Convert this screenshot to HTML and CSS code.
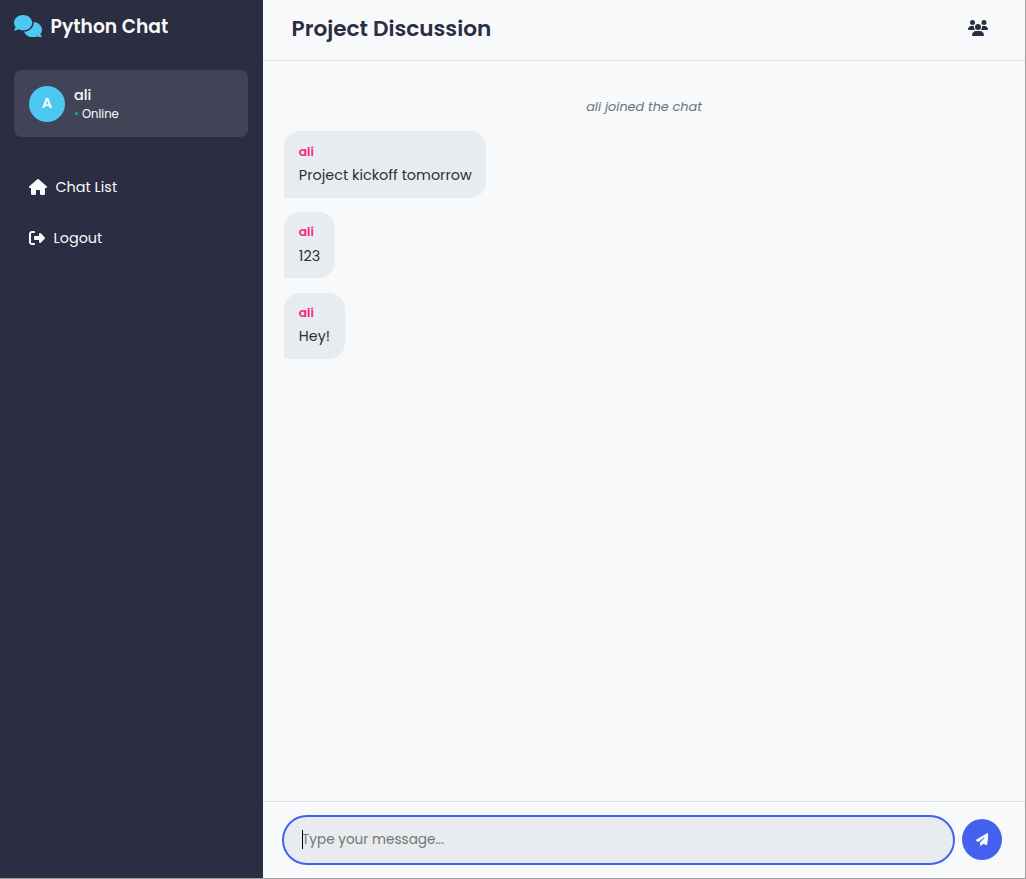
FILE: index.html
```html
<!DOCTYPE html>
<html lang="en">
<head>
<meta charset="utf-8">
<title>Python Chat</title>
<link rel="stylesheet" href="styles.css">
</head>
<body>
<div class="app">
  <aside class="sidebar">
    <div class="brand">
      <svg class="brand-icon" viewBox="0 0 640 512"><path d="M208 352c114.9 0 208-78.8 208-176S322.9 0 208 0S0 78.8 0 176c0 38.6 14.7 74.3 39.6 103.4c-3.5 9.4-8.7 17.7-14.2 24.7c-4.8 6.2-9.7 11-13.3 14.3c-1.8 1.6-3.3 2.9-4.3 3.7c-.5 .4-.9 .7-1.1 .8l-.2 .2C1 327.2-1.4 334.4 .8 340.9S9.1 352 16 352c21.8 0 43.8-5.6 62.1-12.5c9.2-3.5 17.8-7.4 25.2-11.4C134.1 343.3 169.8 352 208 352zM448 176c0 112.3-99.1 196.9-216.5 207C255.8 457.4 336.4 512 432 512c38.2 0 73.9-8.7 104.7-23.9c7.5 4 16 7.9 25.2 11.4c18.3 6.9 40.3 12.5 62.1 12.5c6.9 0 13.1-4.5 15.2-11.1c2.1-6.6-.2-13.8-5.8-17.9l-.2-.2c-.2-.2-.6-.4-1.1-.8c-1-.8-2.5-2-4.3-3.7c-3.6-3.3-8.5-8.1-13.3-14.3c-5.5-7-10.7-15.4-14.2-24.7c24.9-29 39.6-64.7 39.6-103.4c0-92.8-84.9-168.9-192.6-175.5c.4 5.1 .6 10.3 .6 15.5z"/></svg>
      <span class="brand-name">Python Chat</span>
    </div>
    <div class="user-card">
      <div class="avatar">A</div>
      <div class="user-info">
        <div class="user-name">ali</div>
        <div class="user-status"><i class="dot"></i><span>Online</span></div>
      </div>
    </div>
    <nav class="menu">
      <a class="menu-item">
        <svg class="home-icon" viewBox="0 0 576 512"><path d="M575.8 255.5c0 18-15 32.1-32 32.1h-32l.7 160.2c0 2.7-.2 5.4-.5 8.1V472c0 22.1-17.9 40-40 40H456c-1.1 0-2.2 0-3.3-.1c-1.4 .1-2.8 .1-4.2 .1H416 392c-22.1 0-40-17.9-40-40V448 384c0-17.7-14.3-32-32-32H256c-17.7 0-32 14.3-32 32v64 24c0 22.1-17.9 40-40 40H160 128.1c-1.5 0-3-.1-4.5-.2c-1.2 .1-2.4 .2-3.6 .2H104c-22.1 0-40-17.9-40-40V360c0-.9 0-1.9 .1-2.8V287.6H32c-18 0-32-14-32-32.1c0-9 3-17 10-24L266.4 8c7-7 15-8 22-8s15 2 21 7L564.8 231.5c8 7 12 15 11 24z"/></svg>
        <span class="menu-label">Chat List</span>
      </a>
      <a class="menu-item">
        <svg class="exit-icon" viewBox="0 0 512 512"><path d="M377.9 105.9L500.7 228.7c7.2 7.2 11.3 17.1 11.3 27.3s-4.1 20.1-11.3 27.3L377.9 406.1c-6.4 6.4-15 9.9-24 9.9c-18.7 0-33.9-15.2-33.9-33.9l0-62.1-128 0c-17.7 0-32-14.3-32-32l0-64c0-17.7 14.3-32 32-32l128 0 0-62.1c0-18.7 15.2-33.9 33.9-33.9c9 0 17.6 3.6 24 9.9zM160 96L96 96c-17.7 0-32 14.3-32 32l0 256c0 17.7 14.3 32 32 32l64 0c17.7 0 32 14.3 32 32s-14.3 32-32 32l-64 0c-53 0-96-43-96-96L0 128C0 75 43 32 96 32l64 0c17.7 0 32 14.3 32 32s-14.3 32-32 32z"/></svg>
        <span class="menu-label">Logout</span>
      </a>
    </nav>
  </aside>
  <main class="chat">
    <header class="chat-header">
      <h1 class="chat-title">Project Discussion</h1>
      <svg class="users-icon" viewBox="0 0 640 512"><path d="M144 0a80 80 0 1 1 0 160A80 80 0 1 1 144 0zM512 0a80 80 0 1 1 0 160A80 80 0 1 1 512 0zM0 298.7C0 239.8 47.8 192 106.7 192h42.7c15.9 0 31 3.5 44.6 9.7c-1.3 7.2-1.9 14.7-1.9 22.3c0 38.2 16.8 72.5 43.3 96c-.2 0-.4 0-.7 0H21.3C9.6 320 0 310.4 0 298.7zM405.3 320c-.2 0-.4 0-.7 0c26.6-23.5 43.3-57.8 43.3-96c0-7.6-.7-15-1.9-22.3c13.6-6.3 28.7-9.7 44.6-9.7h42.7C592.2 192 640 239.8 640 298.7c0 11.8-9.6 21.3-21.3 21.3H405.3zM224 224a96 96 0 1 1 192 0 96 96 0 1 1 -192 0zM128 485.3C128 411.7 187.7 352 261.3 352H378.7C452.3 352 512 411.7 512 485.3c0 14.7-11.9 26.7-26.7 26.7H154.7c-14.7 0-26.7-11.9-26.7-26.7z"/></svg>
    </header>
    <section class="messages">
      <div class="notice"><span>ali joined the chat</span></div>
      <div class="bubble"><div class="author">ali</div><div class="text">Project kickoff tomorrow</div></div>
      <div class="bubble"><div class="author">ali</div><div class="text">123</div></div>
      <div class="bubble"><div class="author">ali</div><div class="text">Hey!</div></div>
    </section>
    <footer class="composer">
      <div class="field"><i class="caret"></i><span class="placeholder">Type your message...</span></div>
      <div class="send">
        <svg class="send-icon" viewBox="0 0 512 512"><path d="M498.1 5.6c10.1 7 15.4 19.1 13.5 31.2l-64 416c-1.5 9.7-7.4 18.2-16 23s-18.9 5.4-28 1.6L284 427.7l-68.5 74.1c-8.9 9.7-22.9 12.9-35.2 8.1S160 493.2 160 480V396.4c0-4 1.5-7.8 4.2-10.7L331.8 202.8c5.8-6.3 5.6-16-.4-22s-15.7-6.4-22-.7L106 360.8 17.7 316.6C7.1 311.3 .3 300.7 0 288.9s5.9-22.8 16.1-28.7l448-256c10.7-6.1 23.9-5.5 34 1.4z"/></svg>
      </div>
    </footer>
  </main>
</div>
</body>
</html>
```

FILE: styles.css
```css
* { box-sizing: border-box; }
body {
  margin: 0;
  font-family: Poppins, Inter, "Open Sans", sans-serif;
  font-size: 14.4px;
  color: #2b2d42;
  background: #f8f9fa;
}
svg { display: block; fill: currentColor; flex: none; }
span, .text, .author, .user-name, .chat-title { white-space: nowrap; }
.app {
  display: flex;
  width: 1026px;
  height: 879px;
  border-right: 1px solid #a0a0a2;
  border-bottom: 1px solid #a0a0a2;
  overflow: hidden;
}
.sidebar {
  width: 263px;
  flex: none;
  padding: 10px 15px 0 14px;
  background: #2b2d42;
  color: #f8f9fa;
}
.brand { display: flex; align-items: center; height: 32px; gap: 8.6px; }
.brand-icon { width: 28px; height: 22.4px; color: #4cc9f0; }
.brand-name { font-size: 18.72px; font-weight: 600; }
.user-card {
  display: flex;
  align-items: center;
  gap: 8.9px;
  height: 67px;
  margin-top: 28px;
  padding: 0 15px;
  border-radius: 8px;
  background: #434357;
}
.avatar {
  width: 36px;
  height: 36px;
  border-radius: 50%;
  background: #4cc9f0;
  font-weight: 600;
  line-height: 35px;
  text-align: center;
}
.user-name { font-size: 14.4px; font-weight: 500; line-height: 20px; }
.user-status { display: flex; align-items: center; gap: 4px; font-size: 11.6px; line-height: 17px; }
.user-status span { padding-top: 1px; margin-bottom: -1px; }
.dot { width: 3px; height: 3px; margin-left: 1px; border-radius: 50%; background: #10b981; }
.menu { margin-top: 24px; }
.menu-item { display: flex; align-items: center; gap: 8.9px; height: 51px; padding-left: 14.6px; }
.menu-label { padding-top: 1px; }
.home-icon { width: 18px; height: 16px; }
.exit-icon { width: 16px; height: 16px; }
.chat { display: flex; flex: 1; flex-direction: column; min-width: 0; }
.chat-header {
  display: flex;
  align-items: center;
  justify-content: space-between;
  height: 61px;
  padding: 0 37px 4px 28.6px;
  border-bottom: 1px solid #dee2e6;
}
.chat-title { margin: 0; font-size: 21.6px; font-weight: 600; }
.users-icon { width: 20px; height: 16px; }
.messages {
  display: flex;
  flex: 1;
  flex-direction: column;
  align-items: flex-start;
  gap: 14.4px;
  padding: 35px 21px 0;
}
.notice {
  align-self: stretch;
  height: 21px;
  font-size: 12.8px;
  font-style: italic;
  line-height: 21px;
  text-align: center;
  color: #6c757d;
}
.bubble {
  height: 66.2px;
  padding: 10.3px 14.5px 0 14.8px;
  border-radius: 16px 16px 16px 3.6px;
  background: #e9ecef;
}
.author { font-size: 12.2px; font-weight: 600; line-height: 20px; color: #f72585; }
.text { margin-top: 0.3px; line-height: 26px; }
.composer {
  display: flex;
  align-items: center;
  gap: 7px;
  height: 77px;
  padding: 0 23px 0 19px;
  border-top: 1px solid #dee2e6;
}
.field {
  display: flex;
  align-items: center;
  flex: 1;
  height: 50px;
  padding: 0 0 2px 18px;
  border: 2px solid #4361ee;
  border-radius: 25px;
  background: #e9ecef;
  color: #757575;
}
.placeholder { margin-left: -1px; padding-top: 2px; font-size: 13.6px; }
.caret { z-index: 1; width: 1px; height: 19px; background: #000; }
.send {
  display: flex;
  align-items: center;
  justify-content: center;
  width: 40px;
  height: 41px;
  margin-bottom: 1px;
  border-radius: 50%;
  background: #4361ee;
  color: #f8f9fa;
}
.send-icon { width: 12.8px; height: 12.8px; }
```
